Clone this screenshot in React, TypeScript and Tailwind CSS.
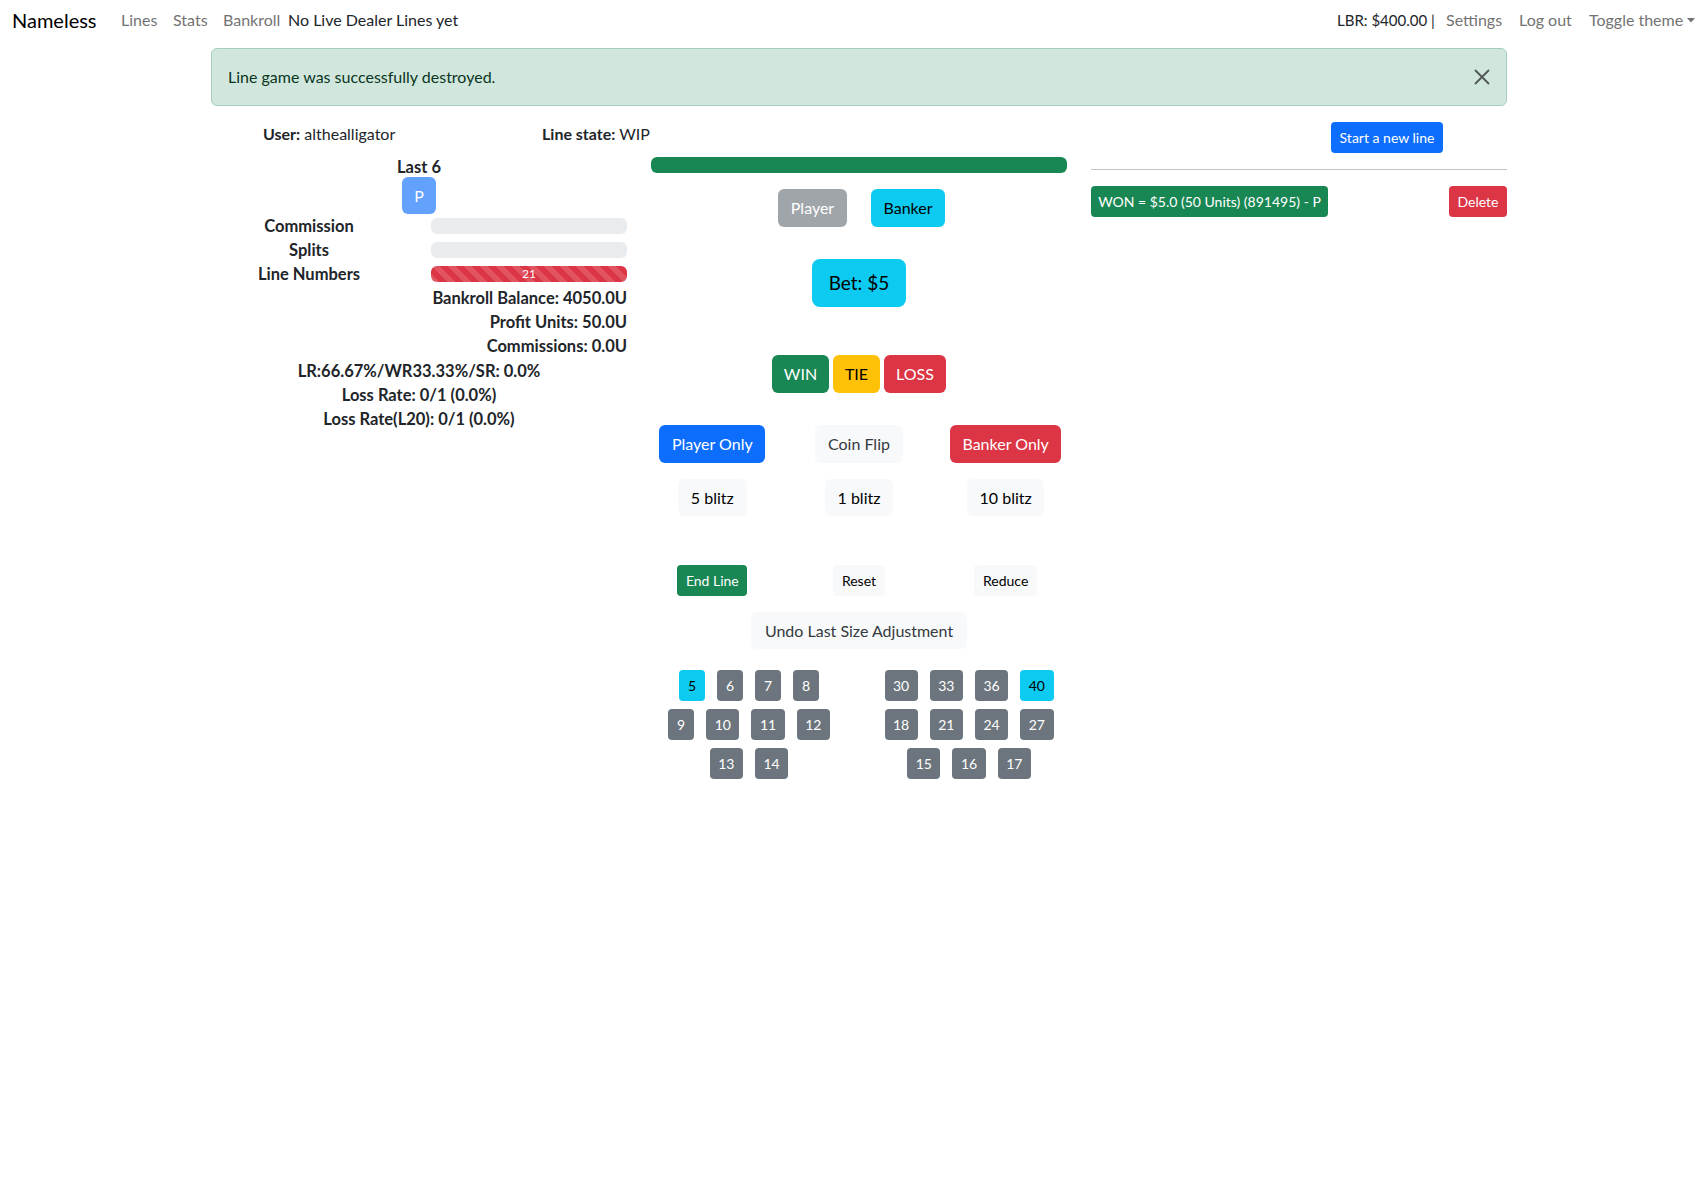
type NumBtn = { label: string; info?: boolean };

const leftRows: NumBtn[][] = [
  [{ label: "5", info: true }, { label: "6" }, { label: "7" }, { label: "8" }],
  [{ label: "9" }, { label: "10" }, { label: "11" }, { label: "12" }],
  [{ label: "13" }, { label: "14" }],
];

const rightRows: NumBtn[][] = [
  [{ label: "30" }, { label: "33" }, { label: "36" }, { label: "40", info: true }],
  [{ label: "18" }, { label: "21" }, { label: "24" }, { label: "27" }],
  [{ label: "15" }, { label: "16" }, { label: "17" }],
];

const stripes =
  "bg-[linear-gradient(45deg,rgba(255,255,255,.15)_25%,transparent_25%,transparent_50%,rgba(255,255,255,.15)_50%,rgba(255,255,255,.15)_75%,transparent_75%,transparent)] bg-[length:16px_16px]";

const NumberGrid = ({ rows }: { rows: NumBtn[][] }) => {
  return (
    <div className="flex flex-col gap-2">
      {rows.map((row, ri) => (
        <div key={`row-${ri}`} className="flex justify-center gap-3">
          {row.map((n) => (
            <div
              key={n.label}
              className={
                n.info
                  ? "h-[31px] px-[8.5px] min-w-[26px] flex items-center justify-center rounded bg-[#0dcaf0] text-black text-[14px]"
                  : "h-[31px] px-[8.5px] min-w-[26px] flex items-center justify-center rounded bg-[#6c757d] text-white text-[14px]"
              }
            >
              {n.label}
            </div>
          ))}
        </div>
      ))}
    </div>
  );
};

export default function App() {
  return (
    <div className="min-h-[1200px] bg-white text-[#212529] font-['Lato',sans-serif] text-[16px]">
      {/* navbar */}
      <nav className="h-[40px] flex items-center justify-between">
        <div className="flex items-center">
          <span className="pl-3 w-[121px] text-[20px] text-black">Nameless</span>
          <span className="w-[52px] text-[#737373]">Lines</span>
          <span className="w-[50px] text-[#737373]">Stats</span>
          <span className="w-[65px] text-[#737373]">Bankroll</span>
          <span>No Live Dealer Lines yet</span>
        </div>
        <div className="flex items-center">
          <span className="w-[109px] text-[15px]">LBR: $400.00 |</span>
          <span className="w-[73px] text-[#737373]">Settings</span>
          <span className="w-[70px] text-[#737373]">Log out</span>
          <span className="w-[107px] text-[#737373] flex items-center gap-[4px] whitespace-nowrap">
            Toggle theme
            <svg width="8" height="5" viewBox="0 0 8 5">
              <path d="M0 0 L8 0 L4 4.5 Z" fill="#737373" />
            </svg>
          </span>
        </div>
      </nav>

      {/* alert */}
      <div className="mt-[8px] ml-[211px] w-[1296px] h-[58px] flex items-center justify-between pl-4 pr-4 rounded-md border border-[#a3cfbb] bg-[#d1e7dd] text-[#0a3622]">
        <span>Line game was successfully destroyed.</span>
        <svg width="16" height="16" viewBox="0 0 16 16" className="opacity-60">
          <path d="M1 1 L15 15 M15 1 L1 15" stroke="#000" strokeWidth="2" />
        </svg>
      </div>

      {/* main row */}
      <div className="mt-[4px] ml-[211px] grid grid-cols-[416px_416px_416px] gap-x-6">
        {/* left column */}
        <div className="pt-[12px]">
          <div className="h-[24px] flex items-center whitespace-nowrap">
            <span className="ml-[52px] w-[279px] shrink-0">
              <b className="font-bold">User:</b> althealligator
            </span>
            <span className="shrink-0">
              <b className="font-bold">Line state:</b> WIP
            </span>
          </div>
          <div className="h-[31px] flex items-end justify-center font-bold text-[16.5px] leading-[20px]">
            Last 6
          </div>
          <div className="flex justify-center">
            <div className="w-[34px] h-[37px] rounded-md bg-[#62a1fe] text-white flex items-center justify-center">
              P
            </div>
          </div>
          <div className="grid grid-cols-2 gap-x-6 font-bold text-[16.5px]">
            <div className="h-[24px] flex items-center justify-center">Commission</div>
            <div className="h-[24px] flex items-center">
              <div className="w-full h-[16px] rounded-md bg-[#e9ecef]" />
            </div>
            <div className="h-[24px] flex items-center justify-center">Splits</div>
            <div className="h-[24px] flex items-center">
              <div className="w-full h-[16px] rounded-md bg-[#e9ecef]" />
            </div>
            <div className="h-[24px] flex items-center justify-center">Line Numbers</div>
            <div className="h-[24px] flex items-center">
              <div
                className={`w-full h-[16px] rounded-md bg-[#dc3545] ${stripes} text-white text-[12px] font-normal flex items-center justify-center`}
              >
                21
              </div>
            </div>
          </div>
          <div className="font-bold text-[16.5px] text-right">
            <div className="h-[24px] flex items-center justify-end">Bankroll Balance: 4050.0U</div>
            <div className="h-[24px] flex items-center justify-end">Profit Units: 50.0U</div>
            <div className="h-[24px] flex items-center justify-end">Commissions: 0.0U</div>
          </div>
          <div className="mt-[1px] font-bold text-[16.5px] text-center">
            <div className="h-[24px] flex items-center justify-center">LR:66.67%/WR33.33%/SR: 0.0%</div>
            <div className="h-[24px] flex items-center justify-center">Loss Rate: 0/1 (0.0%)</div>
            <div className="h-[24px] flex items-center justify-center">Loss Rate(L20): 0/1 (0.0%)</div>
          </div>
        </div>

        {/* middle column */}
        <div className="pt-[47px]">
          <div className="h-[16px] rounded-md bg-[#198754]" />
          <div className="mt-[16px] pl-[5px] flex justify-center gap-6">
            <div className="w-[69px] h-[38px] rounded-md bg-[#a0a5aa] text-white flex items-center justify-center">
              Player
            </div>
            <div className="w-[74px] h-[38px] rounded-md bg-[#0dcaf0] text-black flex items-center justify-center">
              Banker
            </div>
          </div>
          <div className="mt-[32px] flex justify-center">
            <div className="w-[94px] h-[48px] rounded-lg bg-[#0dcaf0] text-black text-[19px] flex items-center justify-center">
              Bet: $5
            </div>
          </div>
          <div className="mt-[48px] flex justify-center gap-1">
            <div className="w-[57px] h-[38px] rounded-md bg-[#198754] text-white flex items-center justify-center">
              WIN
            </div>
            <div className="w-[47px] h-[38px] rounded-md bg-[#ffc107] text-black flex items-center justify-center">
              TIE
            </div>
            <div className="w-[62px] h-[38px] rounded-md bg-[#dc3545] text-white flex items-center justify-center">
              LOSS
            </div>
          </div>
          <div className="-mx-3 mt-[32px] grid grid-cols-3">
            <div className="flex justify-center">
              <div className="w-[106px] h-[38px] rounded-md bg-[#0d6efd] text-white flex items-center justify-center">
                Player Only
              </div>
            </div>
            <div className="flex justify-center">
              <div className="w-[88px] h-[38px] rounded-md bg-[#f8f9fa] text-[#343a40] flex items-center justify-center">
                Coin Flip
              </div>
            </div>
            <div className="flex justify-center">
              <div className="w-[111px] h-[38px] rounded-md bg-[#dc3545] text-white flex items-center justify-center">
                Banker Only
              </div>
            </div>
          </div>
          <div className="-mx-3 mt-[16px] grid grid-cols-3">
            <div className="flex justify-center">
              <div className="w-[69px] h-[37px] rounded-md bg-[#f8f9fa] text-black flex items-center justify-center">
                5 blitz
              </div>
            </div>
            <div className="flex justify-center">
              <div className="w-[68px] h-[37px] rounded-md bg-[#f8f9fa] text-black flex items-center justify-center">
                1 blitz
              </div>
            </div>
            <div className="flex justify-center">
              <div className="w-[77px] h-[37px] rounded-md bg-[#f8f9fa] text-black flex items-center justify-center">
                10 blitz
              </div>
            </div>
          </div>
          <div className="-mx-3 mt-[49px] grid grid-cols-3 text-[14px]">
            <div className="flex justify-center">
              <div className="w-[70px] h-[31px] rounded bg-[#198754] text-white flex items-center justify-center">
                End Line
              </div>
            </div>
            <div className="flex justify-center">
              <div className="w-[52px] h-[31px] rounded bg-[#f8f9fa] text-black flex items-center justify-center">
                Reset
              </div>
            </div>
            <div className="flex justify-center">
              <div className="w-[63px] h-[31px] rounded bg-[#f8f9fa] text-black flex items-center justify-center">
                Reduce
              </div>
            </div>
          </div>
          <div className="mt-[16px] flex justify-center">
            <div className="w-[216px] h-[37px] rounded-md bg-[#f8f9fa] text-[#343a40] flex items-center justify-center">
              Undo Last Size Adjustment
            </div>
          </div>
          <div className="-mx-3 mt-[21px] grid grid-cols-2">
            <NumberGrid rows={leftRows} />
            <NumberGrid rows={rightRows} />
          </div>
        </div>

        {/* right column */}
        <div className="pt-[12px]">
          <div className="pl-[240px]">
            <div className="w-[112px] h-[31px] rounded bg-[#0d6efd] text-white text-[14px] flex items-center justify-center">
              Start a new line
            </div>
          </div>
          <div className="mt-[16px] border-t border-[#c4c4c4]" />
          <div className="mt-[16px] flex items-center justify-between text-[14px]">
            <div className="w-[237px] h-[31px] rounded bg-[#198754] text-white flex items-center justify-center">
              WON = $5.0 (50 Units) (891495) - P
            </div>
            <div className="w-[58px] h-[31px] rounded bg-[#dc3545] text-white flex items-center justify-center">
              Delete
            </div>
          </div>
        </div>
      </div>
    </div>
  );
}
